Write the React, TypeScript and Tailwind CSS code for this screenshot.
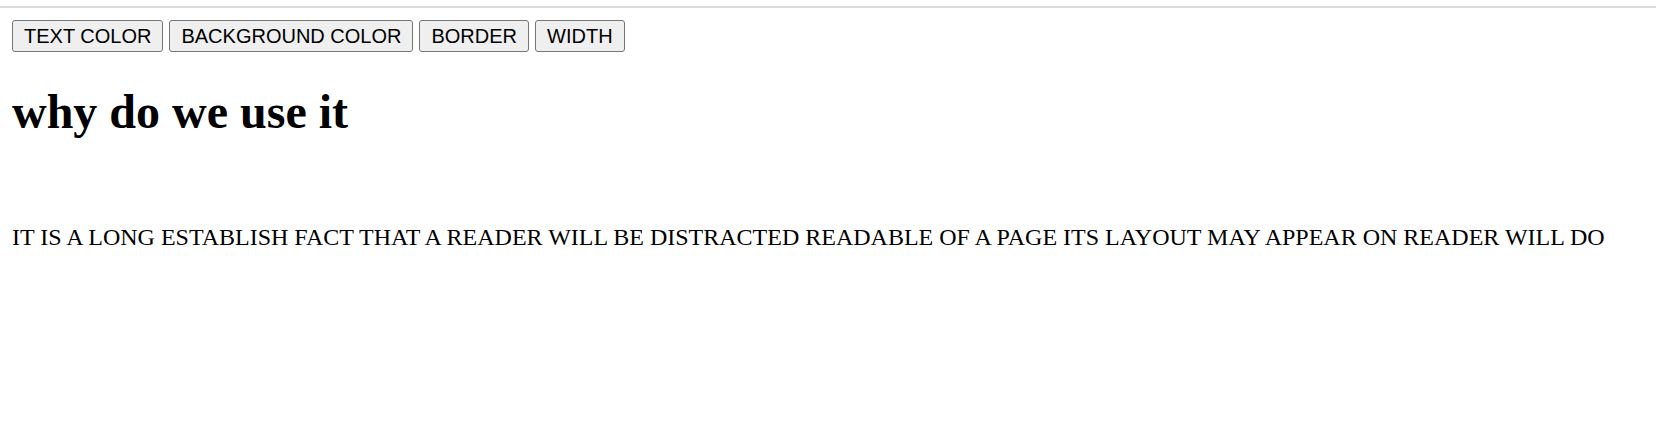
export default function App() {
  const btn =
    "h-[32px] px-[11px] bg-[#efefef] border border-[#767676] rounded-[3px] text-[20px] leading-[23px] text-black font-['Liberation_Sans',Arial,sans-serif]";
  return (
    <div className="w-[1656px] h-[440px] bg-white overflow-hidden font-['Liberation_Serif','Times_New_Roman',serif] text-black">
      <div className="pt-[6px]">
        <div className="h-[2px] bg-[#dcdcdc]" />
      </div>
      <div className="px-[12px]">
        <div className="flex gap-[6px] mt-[12px]">
          <button className={btn}>TEXT COLOR</button>
          <button className={btn}>BACKGROUND COLOR</button>
          <button className={btn}>BORDER</button>
          <button className={btn}>WIDTH</button>
        </div>
        <h1 className="mt-[32px] text-[48px] font-bold leading-[55px]">why do we use it</h1>
        <p className="mt-[84px] text-[24px] leading-[28px] whitespace-nowrap">
          IT IS A LONG ESTABLISH FACT THAT A READER WILL BE DISTRACTED READABLE OF A PAGE ITS LAYOUT MAY APPEAR ON READER WILL DO
        </p>
      </div>
    </div>
  );
}
